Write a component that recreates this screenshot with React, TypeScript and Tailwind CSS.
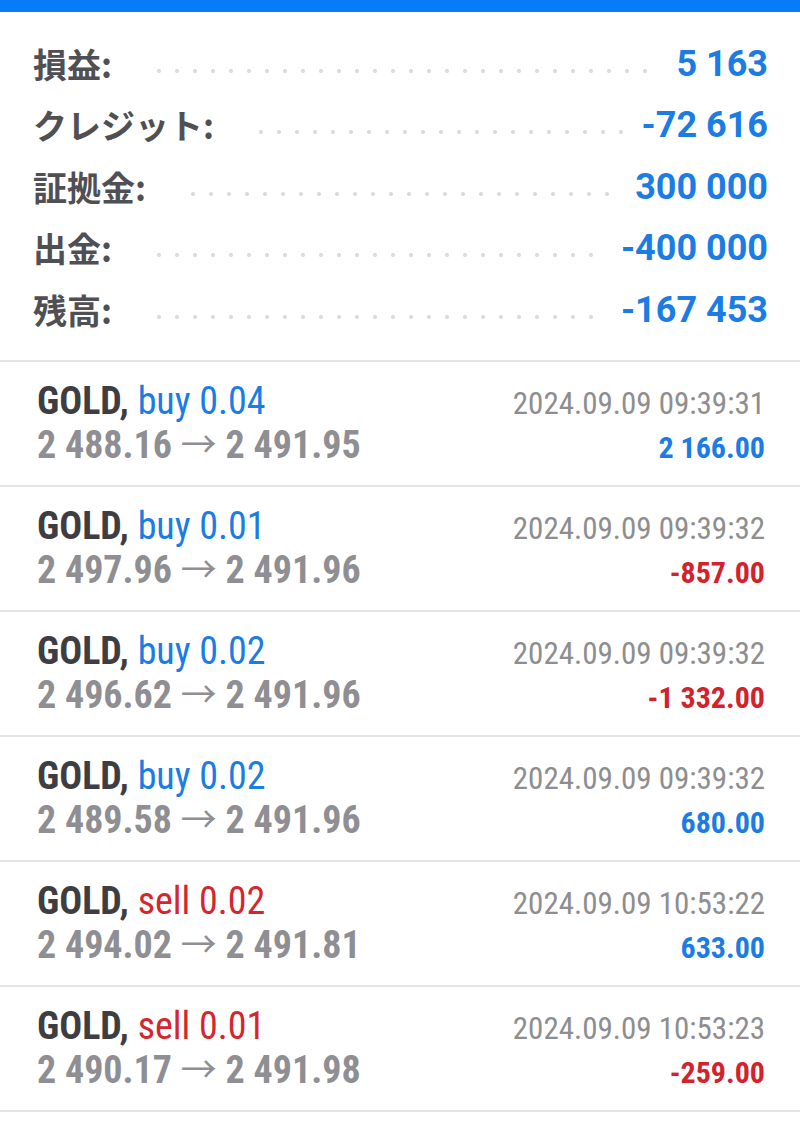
const summary = [
  { label: "損益:", value: "5 163" },
  { label: "クレジット:", value: "-72 616" },
  { label: "証拠金:", value: "300 000" },
  { label: "出金:", value: "-400 000" },
  { label: "残高:", value: "-167 453" },
];

type Deal = {
  side: "buy" | "sell";
  volume: string;
  open: string;
  close: string;
  time: string;
  profit: string;
};

const deals: Deal[] = [
  { side: "buy", volume: "0.04", open: "2 488.16", close: "2 491.95", time: "2024.09.09 09:39:31", profit: "2 166.00" },
  { side: "buy", volume: "0.01", open: "2 497.96", close: "2 491.96", time: "2024.09.09 09:39:32", profit: "-857.00" },
  { side: "buy", volume: "0.02", open: "2 496.62", close: "2 491.96", time: "2024.09.09 09:39:32", profit: "-1 332.00" },
  { side: "buy", volume: "0.02", open: "2 489.58", close: "2 491.96", time: "2024.09.09 09:39:32", profit: "680.00" },
  { side: "sell", volume: "0.02", open: "2 494.02", close: "2 491.81", time: "2024.09.09 10:53:22", profit: "633.00" },
  { side: "sell", volume: "0.01", open: "2 490.17", close: "2 491.98", time: "2024.09.09 10:53:23", profit: "-259.00" },
];

function SummaryRow({ label, value }: { label: string; value: string }) {
  return (
    <div className="flex items-center h-[61.5px]">
      <span className="text-[34px] font-semibold text-[#505054] font-['Noto_Sans_CJK_JP',sans-serif] leading-none">
        {label}
      </span>
      {/* leader dots */}
      <span className="flex-1 self-center mt-[14px] ml-[45px] mr-[18px] h-[4px] bg-[radial-gradient(circle_at_2px_2px,#dcdcdc_1.8px,transparent_2.3px)] bg-[length:18px_4px] bg-repeat-x" />
      <span className="text-[36px] font-bold text-[#1a7ce4] font-['Roboto',sans-serif] leading-none">
        {value}
      </span>
    </div>
  );
}

function DealRow({ deal }: { deal: Deal }) {
  const negative = deal.profit.startsWith("-");
  return (
    <div className="flex justify-between border-b-2 border-[#e4e4e6] pl-[37px] pr-[35px] pt-[17px] pb-[18px] font-['Roboto',sans-serif] [font-stretch:75%]">
      <div className="flex flex-col">
        <div className="h-[44px] text-[38px] leading-[44px] whitespace-nowrap">
          <span className="font-bold text-[#3d3d42]">GOLD,</span>{" "}
          <span className={deal.side === "buy" ? "text-[#1a7ce4]" : "text-[#d3262d]"}>
            {deal.side} {deal.volume}
          </span>
        </div>
        <div className="h-[44px] text-[38px] leading-[44px] font-bold text-[#8e8e93] whitespace-nowrap">
          {deal.open}{" "}
          <span className="font-normal font-['Noto_Sans_CJK_JP',sans-serif] text-[36px] leading-none">→</span>{" "}
          {deal.close}
        </div>
      </div>
      <div className="flex flex-col items-end pt-[3px]">
        <div className="h-[44px] text-[31px] leading-[44px] text-[#8e8e90]">{deal.time}</div>
        <div className={`h-[41px] text-[30px] leading-[44px] font-bold ${negative ? "text-[#d3222b]" : "text-[#1a7ce4]"}`}>
          {deal.profit}
        </div>
      </div>
    </div>
  );
}

export default function App() {
  return (
    <div className="w-[800px] h-[1128px] bg-white overflow-hidden">
      <div className="h-[12px] bg-[#087bf6]" />
      <div className="pl-[33px] pr-[32px] pt-[21px] pb-[19px] border-b-2 border-[#e4e4e6]">
        {summary.map((s) => (
          <SummaryRow key={s.label} label={s.label} value={s.value} />
        ))}
      </div>
      <div>
        {deals.map((d, i) => (
          <DealRow key={i} deal={d} />
        ))}
      </div>
    </div>
  );
}
